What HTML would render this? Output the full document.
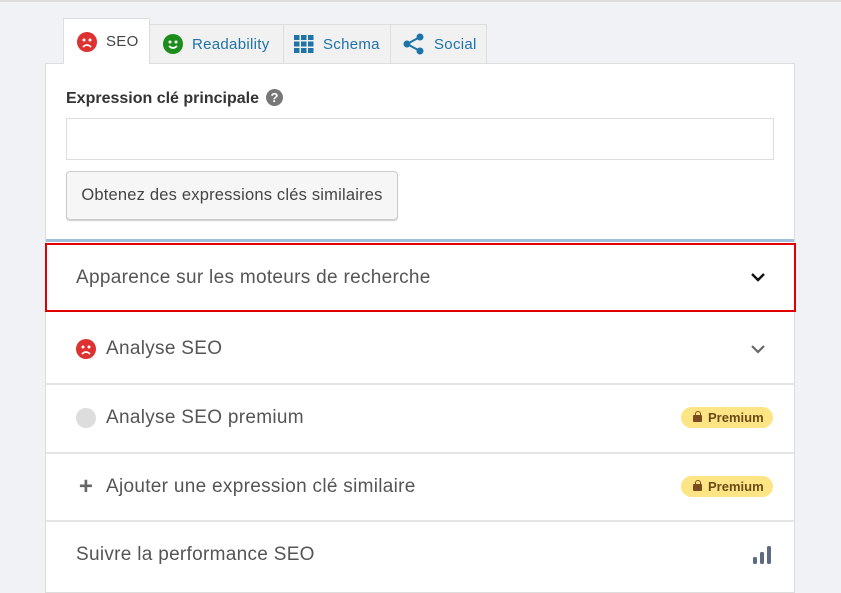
<!DOCTYPE html>
<html><head><meta charset="utf-8"><style>
*{box-sizing:border-box;margin:0;padding:0}
body{width:841px;height:588px;background:#f0f2f6;font-family:"Liberation Sans",sans-serif;position:relative;overflow:hidden;color:#444}
.top{position:absolute;left:0;top:0;width:841px;height:2px;background:#ddd}
.tab{position:absolute;top:24px;height:39px;background:#f1f1f1;border:1px solid #ddd;border-bottom:none;font-size:15px;letter-spacing:0.3px;color:#1e73a8;display:flex;align-items:center}
.tab svg{margin-right:9px}
.panel{position:absolute;left:45px;top:63px;width:750px;height:530px;background:#fff;border:1px solid #ddd}
.lbl{position:absolute;left:66px;top:89px;font-size:16px;font-weight:bold;color:#333}
.q{display:inline-block;width:17px;height:17px;border-radius:50%;background:#777;color:#fff;font-size:13px;text-align:center;line-height:17px;margin-left:7px;vertical-align:1px}
.inp{position:absolute;left:66px;top:118px;width:708px;height:42px;border:1px solid #ddd;background:#fff}
.btn{position:absolute;left:66px;top:171px;width:332px;height:49px;border:1px solid #ccc;border-radius:4px;background:#f6f6f6;font-size:16.5px;letter-spacing:0.2px;color:#444;line-height:47px;text-align:center;box-shadow:0 1px 1px #ccc}
.row{position:absolute;left:46px;width:748px;height:68px;border-top:2px solid #e5e5e5;font-size:19px;letter-spacing:0.3px;color:#555;display:flex;align-items:center;padding-left:30px}
.prem{position:absolute;right:21px;top:22px;height:21px;width:92px;border-radius:11px;background:#fde586;color:#6b4a16;font-size:13px;letter-spacing:0;font-weight:bold;line-height:21px;padding-left:27px}
.prem:before{content:"";position:absolute;left:12px;top:8px;width:9px;height:7px;background:#7a4b1c;border-radius:1px}
.prem:after{content:"";position:absolute;left:13.5px;top:4px;width:4px;height:5px;border:1.5px solid #7a4b1c;border-bottom:none;border-radius:3px 3px 0 0}
</style></head><body>
<div class="top"></div>
<div class="panel"></div>
<div class="tab" style="left:63px;top:18px;height:46px;width:87px;background:#fff;color:#444;padding-left:13px;z-index:2">
<svg width="20" height="20" viewBox="0 0 20 20"><circle cx="10" cy="10" r="10" fill="#dc3232"/><circle cx="7" cy="8" r="1.5" fill="#fff"/><circle cx="13" cy="8" r="1.5" fill="#fff"/><path d="M6 15 Q10 11 14 15" stroke="#fff" stroke-width="1.6" fill="none"/></svg>SEO</div>
<div class="tab" style="left:149px;width:135px;padding-left:13px">
<svg width="20" height="20" viewBox="0 0 20 20"><circle cx="10" cy="10" r="10" fill="#1c8c1c"/><circle cx="7" cy="8" r="1.5" fill="#fff"/><circle cx="13" cy="8" r="1.5" fill="#fff"/><path d="M6 12 Q10 16 14 12" stroke="#fff" stroke-width="1.6" fill="none"/></svg>Readability</div>
<div class="tab" style="left:283px;width:108px;padding-left:10px">
<svg width="20" height="20" viewBox="0 0 20 20" fill="#1e73a8"><rect x="0" y="1" width="5.5" height="5"/><rect x="7" y="1" width="5.5" height="5"/><rect x="14" y="1" width="5.5" height="5"/><rect x="0" y="7.5" width="5.5" height="5"/><rect x="7" y="7.5" width="5.5" height="5"/><rect x="14" y="7.5" width="5.5" height="5"/><rect x="0" y="14" width="5.5" height="5"/><rect x="7" y="14" width="5.5" height="5"/><rect x="14" y="14" width="5.5" height="5"/></svg>Schema</div>
<div class="tab" style="left:390px;width:97px;padding-left:12px">
<svg width="22" height="22" viewBox="0 0 22 22"><circle cx="17" cy="4" r="3.5" fill="#1e73a8"/><circle cx="4" cy="11" r="3.5" fill="#1e73a8"/><circle cx="17" cy="18" r="3.5" fill="#1e73a8"/><path d="M17 4 L4 11 L17 18" stroke="#1e73a8" stroke-width="2" fill="none"/></svg>Social</div>
<div class="lbl">Expression clé principale<span class="q">?</span></div>
<div class="inp"></div>
<div class="btn">Obtenez des expressions clés similaires</div>
<div style="position:absolute;left:46px;top:239px;width:748px;height:3px;background:#9fbfdc"></div>
<div class="row" style="top:243px;height:69px;border:2px solid #e00000;left:45px;width:751px;padding-left:29px">Apparence sur les moteurs de recherche
<svg style="position:absolute;right:28px;top:27px" width="16" height="10" viewBox="0 0 16 10"><path d="M2 2 L8 8 L14 2" stroke="#111" stroke-width="2.4" fill="none"/></svg></div>
<div class="row" style="top:314px;border-top:none;height:69px"><svg width="20" height="20" viewBox="0 0 20 20" style="margin-right:10px"><circle cx="10" cy="10" r="10" fill="#dc3232"/><circle cx="7" cy="8" r="1.5" fill="#fff"/><circle cx="13" cy="8" r="1.5" fill="#fff"/><path d="M6 15 Q10 11 14 15" stroke="#fff" stroke-width="1.6" fill="none"/></svg>Analyse SEO
<svg style="position:absolute;right:28px;top:30px" width="16" height="10" viewBox="0 0 16 10"><path d="M2 2 L8 8 L14 2" stroke="#666" stroke-width="2.2" fill="none"/></svg></div>
<div class="row" style="top:383px"><span style="display:inline-block;width:20px;height:20px;border-radius:50%;background:#ddd;margin-right:10px"></span>Analyse SEO premium<span class="prem">Premium</span></div>
<div class="row" style="top:452px"><span style="font-size:24px;font-weight:bold;color:#666;margin-right:10px;width:20px;text-align:center">+</span>Ajouter une expression clé similaire<span class="prem">Premium</span></div>
<div class="row" style="top:520px">Suivre la performance SEO
<svg style="position:absolute;right:22px;top:24px" width="20" height="18" viewBox="0 0 20 18" fill="#5d6b82"><rect x="1" y="11" width="4" height="7" rx="1.5"/><rect x="8" y="6" width="4" height="12" rx="1.5"/><rect x="15" y="0" width="4" height="18" rx="1.5"/></svg></div>
</body></html>
